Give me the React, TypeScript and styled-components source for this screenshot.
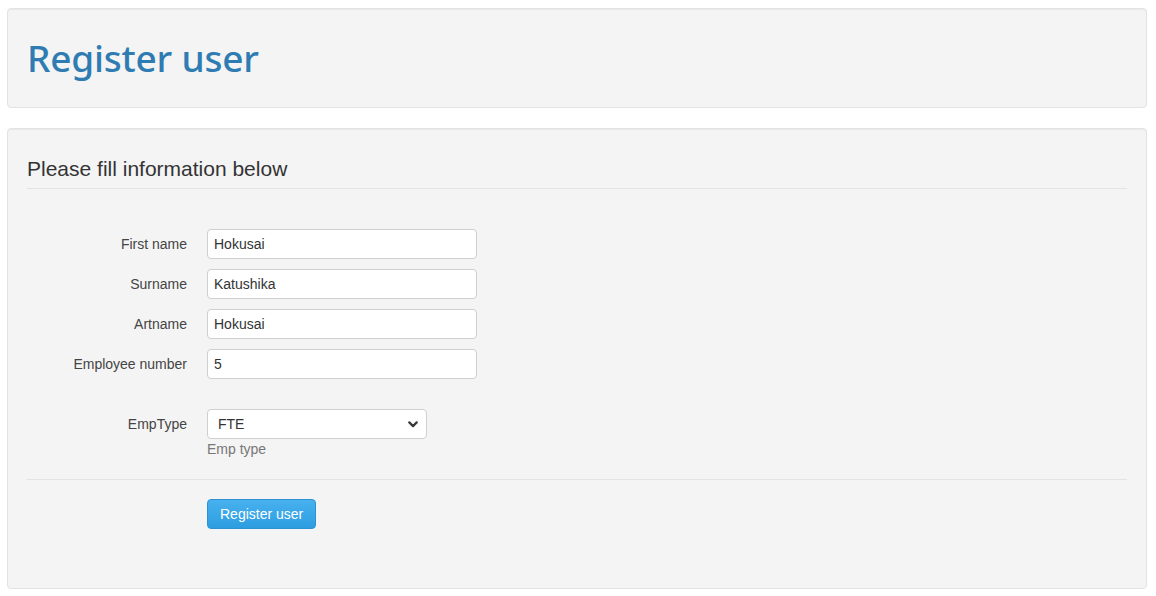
import React from 'react';
import styled, { createGlobalStyle } from 'styled-components';

const GlobalStyle = createGlobalStyle`
  html, body {
    margin: 0;
    padding: 0;
    background: #fff;
  }
  body {
    font-family: 'Liberation Sans', Arial, sans-serif;
    font-size: 14px;
    color: #333;
  }
  * {
    box-sizing: border-box;
  }
`;

const chevron = encodeURIComponent(
  `<svg xmlns="http://www.w3.org/2000/svg" width="10" height="7" viewBox="0 0 10 7"><path d="M1.3 1.4 L5 5.1 L8.7 1.4" fill="none" stroke="#3a3a3a" stroke-width="2.2" stroke-linecap="round" stroke-linejoin="round"/></svg>`
);

const Page = styled.div`
  padding: 8px 9px 0 7px;
`;

const Well = styled.section`
  background-color: #f4f4f4;
  border: 1px solid #e3e3e3;
  border-radius: 4px;
  box-shadow: inset 0 1px 1px rgba(0, 0, 0, 0.05);
  padding: 19px;
  margin-bottom: 20px;
`;

const Title = styled.h1`
  margin: 0;
  height: 60px;
  line-height: 60px;
  font-family: 'Noto Sans', 'Open Sans', sans-serif;
  font-weight: 500;
  font-size: 37px;
  letter-spacing: -0.2px;
  color: #2f7cb3;
`;

const Legend = styled.h2`
  margin: 0 0 40px;
  padding-top: 1px;
  line-height: 39px;
  font-size: 21px;
  font-weight: 400;
  color: #333;
  border-bottom: 1px solid #e3e3e3;
`;

const FormGrid = styled.div`
  display: grid;
  grid-template-columns: 160px 1fr;
  column-gap: 20px;
`;

const Row = styled.div`
  display: contents;
`;

const Label = styled.label<{ $top?: number }>`
  grid-column: 1;
  text-align: right;
  line-height: 30px;
  height: 30px;
  color: #444;
  margin-top: ${({ $top }) => $top ?? 0}px;
`;

const Field = styled.div<{ $top?: number }>`
  grid-column: 2;
  margin-bottom: 10px;
  margin-top: ${({ $top }) => $top ?? 0}px;
`;

const TextInput = styled.input`
  display: block;
  width: 270px;
  height: 30px;
  padding: 4px 6px;
  font-family: 'Liberation Sans', Arial, sans-serif;
  font-size: 14px;
  color: #333;
  background: #fff;
  border: 1px solid #cfcfcf;
  border-radius: 4px;
  outline: none;
`;

const Select = styled.select`
  display: block;
  width: 220px;
  height: 30px;
  padding: 0 28px 0 10px;
  font-family: 'Liberation Sans', Arial, sans-serif;
  font-size: 14px;
  color: #333;
  background: #fff url("data:image/svg+xml,${chevron}") no-repeat right 8px center;
  border: 1px solid #cfcfcf;
  border-radius: 4px;
  appearance: none;
  -webkit-appearance: none;
  outline: none;
`;

const Help = styled.span`
  display: block;
  margin-top: 0;
  line-height: 20px;
  color: #777;
`;

const Divider = styled.hr`
  border: 0;
  border-top: 1px solid #e3e3e3;
  margin: 10px 0 19px;
`;

const Actions = styled.div`
  padding-left: 180px;
  margin-bottom: 40px;
`;

const Button = styled.button`
  height: 30px;
  padding: 0 12px;
  font-family: 'Liberation Sans', Arial, sans-serif;
  font-size: 14px;
  color: #fff;
  background-image: linear-gradient(to bottom, #48b1ef, #2d9de0);
  border: 1px solid #2b93d4;
  border-radius: 4px;
  cursor: pointer;
`;

const textFields = [
  { label: 'First name', value: 'Hokusai' },
  { label: 'Surname', value: 'Katushika' },
  { label: 'Artname', value: 'Hokusai' },
  { label: 'Employee number', value: '5' },
];

export default function App() {
  return (
    <Page>
      <GlobalStyle />
      <Well>
        <Title>Register user</Title>
      </Well>
      <Well>
        <Legend>Please fill information below</Legend>
        <FormGrid>
          {textFields.map((f) => (
            <Row key={f.label}>
              <Label>{f.label}</Label>
              <Field>
                <TextInput type="text" defaultValue={f.value} />
              </Field>
            </Row>
          ))}
          <Row>
            <Label $top={20}>EmpType</Label>
            <Field $top={20}>
              <Select defaultValue="FTE">
                <option value="FTE">FTE</option>
                <option value="PTE">PTE</option>
              </Select>
              <Help>Emp type</Help>
            </Field>
          </Row>
        </FormGrid>
        <Divider />
        <Actions>
          <Button type="button">Register user</Button>
        </Actions>
      </Well>
    </Page>
  );
}
